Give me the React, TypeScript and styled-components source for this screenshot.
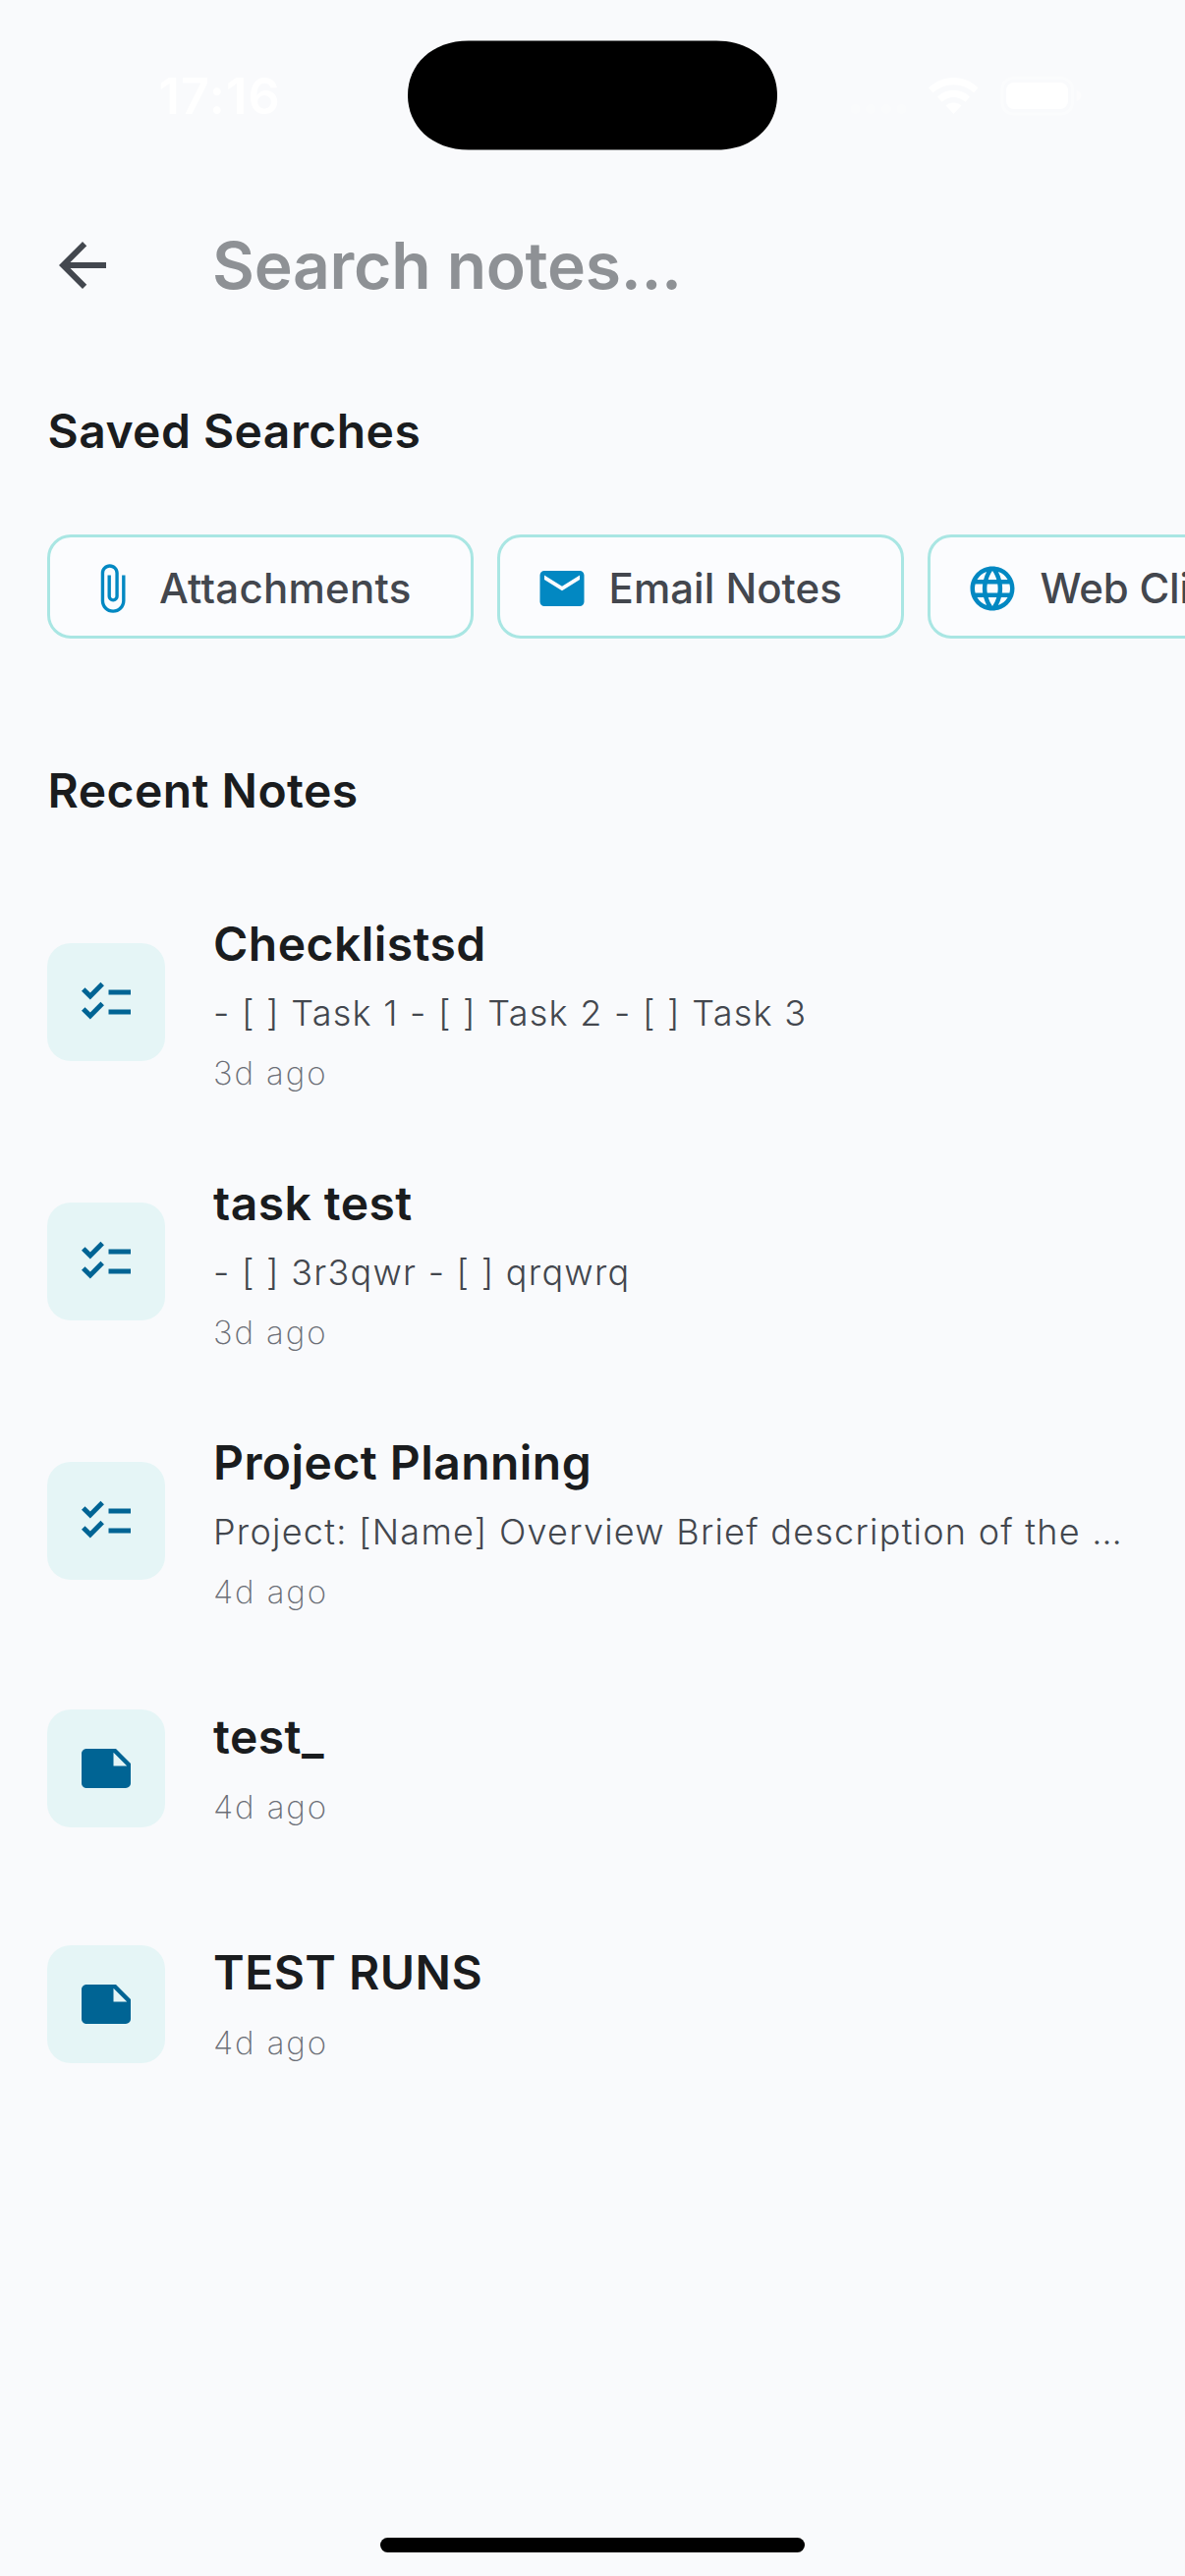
import React from "react";
import styled, { createGlobalStyle } from "styled-components";
import {
  MdArrowBack,
  MdAttachFile,
  MdChecklist,
  MdEmail,
  MdLanguage,
  MdNote,
} from "react-icons/md";

const GlobalStyle = createGlobalStyle`
  * { box-sizing: border-box; }
  body {
    margin: 0;
    background: #f9fafc;
    font-family: Inter, "Liberation Sans", sans-serif;
  }
`;

const Screen = styled.div`
  width: 1206px;
  height: 2622px;
  overflow: hidden;
  display: flex;
  flex-direction: column;
  background: #f9fafc;
`;

const StatusBar = styled.header`
  flex: none;
  height: 186px;
  padding-top: 41px;
  display: grid;
  grid-template-columns: 415px 376px 415px;
  align-items: start;
`;

const Clock = styled.time`
  padding: 26px 0 0 161.5px;
  font-size: 50.5px;
  line-height: 62px;
  font-weight: 600;
  letter-spacing: 1.2px;
  color: #fff;
`;

const Island = styled.svg`
  display: block;
  width: 376px;
  height: 112px;
`;

const StatusIcons = styled.svg`
  display: block;
  width: 250px;
  height: 50px;
  margin: 32px 0 0 69px;
`;

const SearchBar = styled.div`
  flex: none;
  height: 168px;
  padding-left: 48px;
  display: flex;
  align-items: center;
  gap: 96px;
`;

const BackButton = styled.button`
  display: flex;
  padding: 0;
  border: 0;
  background: none;
  color: #43474e;
  font-size: 72px;
`;

const SearchInput = styled.input`
  flex: 1;
  height: 84px;
  padding: 0;
  border: 0;
  outline: 0;
  background: none;
  font: 600 66px/84px Inter, sans-serif;
  letter-spacing: -0.3px;
  color: #1a1c1e;
  &::placeholder {
    color: #8e9195;
    opacity: 1;
  }
`;

const SectionTitle = styled.h2<{ $top: number }>`
  flex: none;
  margin: ${(p) => p.$top}px 0 0 48.5px;
  font-size: 48px;
  line-height: 72px;
  font-weight: 600;
  letter-spacing: 0.45px;
  color: #1a1c1e;
`;

const ChipRow = styled.div`
  flex: none;
  display: flex;
  gap: 24px;
  margin-top: 69px;
  padding-left: 48px;
  overflow: hidden;
`;

const Chip = styled.button<{ $width: number; $tracking: number }>`
  flex: none;
  width: ${(p) => p.$width}px;
  height: 106px;
  padding: 4px 0 0 36px;
  display: flex;
  align-items: center;
  gap: 21px;
  border: 3px solid #a9e6e3;
  border-radius: 24px;
  background: #fbfcfe;
  font: 500 42px/60px Inter, sans-serif;
  letter-spacing: ${(p) => p.$tracking}px;
  white-space: nowrap;
  color: #43474e;
  svg {
    flex: none;
    width: 54px;
    height: 54px;
    color: #0288c2;
  }
`;

const NoteList = styled.ul`
  flex: 1;
  margin: 47px 0 0;
  padding: 0;
  list-style: none;
`;

const NoteRow = styled.li<{ $compact: boolean }>`
  height: ${(p) => (p.$compact ? 240 : 264)}px;
  padding: 0 48px;
  display: flex;
  align-items: center;
  gap: 48px;
`;

const Tile = styled.span`
  flex: none;
  width: 120px;
  height: 120px;
  display: flex;
  align-items: center;
  justify-content: center;
  border-radius: 24px;
  background: #e5f5f6;
  color: #006494;
  font-size: 60px;
`;

const NoteText = styled.div<{ $compact: boolean }>`
  flex: 1;
  min-width: 0;
  display: flex;
  flex-direction: column;
  gap: 12px;
  padding-left: 1px;
  padding-bottom: ${(p) => (p.$compact ? 6 : 0)}px;
`;

const NoteTitle = styled.h3`
  margin: 0;
  padding-top: 1px;
  font-size: 48px;
  line-height: 71px;
  font-weight: 600;
  letter-spacing: 0.45px;
  color: #1a1c1e;
`;

const Preview = styled.p`
  margin: -1px 0 1px;
  overflow: hidden;
  text-overflow: ellipsis;
  white-space: nowrap;
  font-size: 36px;
  line-height: 48px;
  font-weight: 300;
  letter-spacing: 1.25px;
  color: #43474e;
`;

const Age = styled.time`
  font-size: 33px;
  line-height: 48px;
  font-weight: 200;
  letter-spacing: 1.9px;
  color: #6c6f77;
`;

const HomeIndicator = styled.div`
  flex: none;
  align-self: center;
  width: 432px;
  height: 15px;
  margin-bottom: 24px;
  border-radius: 8px;
  background: #000;
`;

const searches = [
  { label: "Attachments", Icon: MdAttachFile, width: 433.6, tracking: 0.27 },
  { label: "Email Notes", Icon: MdEmail, width: 414.8, tracking: 0 },
  { label: "Web Clips", Icon: MdLanguage, width: 380, tracking: -0.2 },
];

const notes = [
  { title: "Checklistsd", preview: "- [ ] Task 1 - [ ] Task 2 - [ ] Task 3", age: "3d ago" },
  { title: "task test", preview: "- [ ] 3r3qwr - [ ] qrqwrq", age: "3d ago" },
  {
    title: "Project Planning",
    preview: "Project: [Name] Overview Brief description of the project",
    age: "4d ago",
  },
  { title: "test_", preview: "", age: "4d ago" },
  { title: "TEST RUNS", preview: "", age: "4d ago" },
];

export default function App() {
  return (
    <>
      <GlobalStyle />
      <Screen>
        <StatusBar>
          <Clock>17:16</Clock>
          <Island viewBox="0 0 376 112">
            <path d="M62 .5H314C352 .5 376 25 376 56S352 111.5 314 111.5H62C24 111.5 0 87 0 56S24 .5 62 .5Z" />
          </Island>
          <StatusIcons viewBox="860 73 250 50" fill="#fff">
            <g opacity="0.3">
              <circle cx="870.5" cy="111" r="5" />
              <circle cx="886" cy="111" r="5" />
              <circle cx="902" cy="111" r="5" />
              <circle cx="917.5" cy="111" r="5" />
            </g>
            <path d="M945 89.5C959 75.500 982 75.500 995.500 89.500L991 94.500C979 83.500 962 83.500 949.500 94.500Z" />
            <path d="M954 98.500C963 89.500 978 89.500 987 98.500L982.500 103.800C975 97.500 966 97.500 958.500 103.800Z" />
            <path d="M962.500 107.500C967 103.500 974 103.500 978.500 107.500L970.500 116Z" />
            <rect x="1020" y="79.500" width="71.500" height="36.500" rx="11.500" fill="none" stroke="#fff" strokeWidth="3" opacity="0.4" />
            <rect x="1024" y="84" width="63" height="27" rx="8" />
            <path d="M1095.500 91.500Q1100.500 94 1100.500 97.500T1095.500 103.500Z" opacity="0.45" />
          </StatusIcons>
        </StatusBar>

        <SearchBar>
          <BackButton aria-label="Back">
            <MdArrowBack />
          </BackButton>
          <SearchInput placeholder="Search notes..." />
        </SearchBar>

        <SectionTitle $top={49}>Saved Searches</SectionTitle>
        <ChipRow>
          {searches.map(({ label, Icon, width, tracking }) => (
            <Chip key={label} $width={width} $tracking={tracking}>
              <Icon />
              {label}
            </Chip>
          ))}
        </ChipRow>

        <SectionTitle $top={119}>Recent Notes</SectionTitle>
        <NoteList>
          {notes.map(({ title, preview, age }) => (
            <NoteRow key={title} $compact={!preview}>
              <Tile>{preview ? <MdChecklist /> : <MdNote />}</Tile>
              <NoteText $compact={!preview}>
                <NoteTitle>{title}</NoteTitle>
                {preview && <Preview>{preview}</Preview>}
                <Age>{age}</Age>
              </NoteText>
            </NoteRow>
          ))}
        </NoteList>
        <HomeIndicator />
      </Screen>
    </>
  );
}
